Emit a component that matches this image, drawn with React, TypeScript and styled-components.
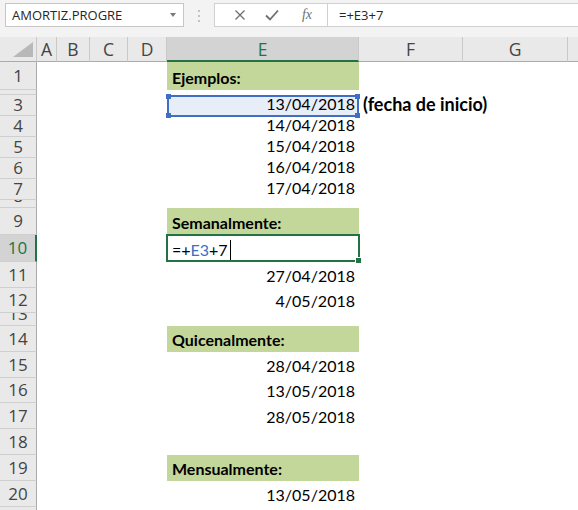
import React from "react";
import styled, { createGlobalStyle, css } from "styled-components";

const GlobalStyle = createGlobalStyle`
  html, body { margin: 0; padding: 0; background: #fff; }
  body { width: 578px; height: 510px; overflow: hidden; font-family: "Open Sans", "Noto Sans", sans-serif; }
`;

const Window = styled.div`
  display: flex;
  flex-direction: column;
  width: 578px;
  height: 510px;
  overflow: hidden;
`;

const FormulaBar = styled.div`
  display: flex;
  align-items: flex-start;
  height: 37px;
  box-sizing: border-box;
  padding: 3px 0 0 5px;
  background: #f3f3f3;
  flex-shrink: 0;
`;

const NameBox = styled.div`
  display: flex;
  align-items: center;
  justify-content: space-between;
  width: 179px;
  height: 24px;
  box-sizing: border-box;
  padding: 0 7px 0 6px;
  border: 1px solid #c6c6c6;
  background: #fff;
  font-size: 13px;
  color: #262626;
`;

const DropArrow = styled.span`
  width: 0;
  height: 0;
  border-left: 3.5px solid transparent;
  border-right: 3.5px solid transparent;
  border-top: 4px solid #7a7a7a;
`;

const Grip = styled.div`
  display: flex;
  flex-direction: column;
  gap: 3px;
  margin: 7px 14px 0 14px;
`;

const GripDot = styled.span`
  width: 2px;
  height: 2px;
  background: #c2c2c2;
`;

const ButtonBox = styled.div`
  display: flex;
  align-items: center;
  width: 113px;
  height: 24px;
  box-sizing: border-box;
  padding-left: 10px;
  border: 1px solid #d0d0d0;
  border-right: none;
  background: #fff;
`;

const BarButton = styled.span<{ $w: number }>`
  display: flex;
  align-items: center;
  justify-content: center;
  width: ${p => p.$w}px;
  height: 22px;
  color: #6e6e6e;
`;

const Fx = styled.span`
  font-family: "Liberation Serif", "DejaVu Serif", serif;
  font-style: italic;
  font-size: 14px;
  color: #707070;
`;

const FormulaInput = styled.div`
  flex: 1;
  display: flex;
  align-items: center;
  height: 24px;
  box-sizing: border-box;
  padding-left: 11px;
  border: 1px solid #d0d0d0;
  border-right: none;
  background: #fff;
  font-size: 13px;
  color: #262626;
`;

const Grid = styled.div<{ $rows: string }>`
  display: grid;
  grid-template-columns: 37px 20px 33px 38px 39px 192px 104px 105px 90px;
  grid-template-rows: 25px ${p => p.$rows};
  width: 658px;
  background: #fff;
`;

const Corner = styled.div`
  position: relative;
  background: #e9e9e9;
  border-right: 1px solid #c9c9c9;
  border-bottom: 1px solid #ababab;
  box-sizing: border-box;
`;

const CornerMark = styled.span`
  position: absolute;
  right: 3px;
  bottom: 4px;
  width: 20px;
  height: 15px;
  background: #b8b8b8;
  clip-path: polygon(100% 0, 100% 100%, 0 100%);
`;

const ColHeader = styled.div<{ $selected?: boolean }>`
  display: flex;
  align-items: center;
  justify-content: center;
  box-sizing: border-box;
  background: #e9e9e9;
  border-right: 1px solid #c9c9c9;
  border-bottom: 1px solid #ababab;
  font-size: 17.5px;
  color: #444;
  overflow: hidden;
  ${p => p.$selected && css`
    background: #d3d3d3;
    color: #217346;
    border-bottom: 2px solid #217346;
  `}
`;

const RowHeader = styled.div<{ $selected?: boolean; $compact?: boolean }>`
  display: flex;
  align-items: ${p => (p.$compact ? "flex-end" : "center")};
  justify-content: center;
  box-sizing: border-box;
  background: #e9e9e9;
  border-right: 1px solid #ababab;
  border-bottom: 1px solid #cfcfcf;
  font-size: 17px;
  line-height: 22px;
  color: #444;
  overflow: hidden;
  ${p => p.$selected && css`
    background: #d3d3d3;
    color: #217346;
    border-right: 2px solid #217346;
  `}
`;

const Cell = styled.div<{ $fill?: boolean; $align?: "left" | "right" }>`
  position: relative;
  display: flex;
  align-items: flex-end;
  justify-content: ${p => (p.$align === "right" ? "flex-end" : "flex-start")};
  box-sizing: border-box;
  padding: 0 4px 4px 5px;
  font-family: Lato, "Open Sans", sans-serif;
  font-size: 16px;
  line-height: 16px;
  color: #000;
  white-space: nowrap;
  background: ${p => (p.$fill ? "#c4d79b" : "transparent")};
`;

const Title = styled.span`
  font-weight: 700;
`;

const Note = styled.span`
  position: relative;
  z-index: 2;
  font-weight: 700;
  font-size: 18px;
  margin-left: -1px;
`;

const RefBox = styled.div`
  position: absolute;
  inset: 0 0 -1px 0;
  border: 2px solid #3f6fc4;
  background: #e8eef8;
  z-index: 0;
`;

const RefHandle = styled.span<{ $top?: boolean; $left?: boolean }>`
  position: absolute;
  width: 5px;
  height: 5px;
  background: #3f6fc4;
  ${p => (p.$top ? "top: -3px;" : "bottom: -3px;")}
  ${p => (p.$left ? "left: -3px;" : "right: -3px;")}
`;

const CellText = styled.span`
  position: relative;
  z-index: 1;
`;

const ActiveBox = styled.div`
  position: absolute;
  inset: -1px -1px 0 -1px;
  border: 2px solid #217346;
  pointer-events: none;
`;

const FillHandle = styled.span`
  position: absolute;
  right: -4px;
  bottom: -4px;
  width: 5px;
  height: 5px;
  background: #217346;
  border: 1px solid #fff;
`;

const RefText = styled.span`
  color: #3f6fc4;
`;

const Caret = styled.span`
  display: inline-block;
  width: 1px;
  height: 20px;
  margin-left: 2px;
  margin-bottom: -2px;
  background: #000;
  vertical-align: bottom;
`;

type RowDef = {
  n: number;
  h: number;
  title?: string;
  date?: string;
  note?: string;
  ref?: boolean;
  edit?: boolean;
};

const rows: RowDef[] = [
  { n: 1, h: 28, title: "Ejemplos:" },
  { n: 2, h: 5 },
  { n: 3, h: 21, date: "13/04/2018", note: "(fecha de inicio)", ref: true },
  { n: 4, h: 21, date: "14/04/2018" },
  { n: 5, h: 21, date: "15/04/2018" },
  { n: 6, h: 21, date: "16/04/2018" },
  { n: 7, h: 21, date: "17/04/2018" },
  { n: 8, h: 8 },
  { n: 9, h: 27, title: "Semanalmente:" },
  { n: 10, h: 27, edit: true },
  { n: 11, h: 26, date: "27/04/2018" },
  { n: 12, h: 25, date: "4/05/2018" },
  { n: 13, h: 13 },
  { n: 14, h: 26, title: "Quicenalmente:" },
  { n: 15, h: 26, date: "28/04/2018" },
  { n: 16, h: 25, date: "13/05/2018" },
  { n: 17, h: 26, date: "28/05/2018" },
  { n: 18, h: 26 },
  { n: 19, h: 26, title: "Mensualmente:" },
  { n: 20, h: 26, date: "13/05/2018" },
  { n: 21, h: 26 },
];

const columns = ["A", "B", "C", "D", "E", "F", "G", "H"];

const CrossIcon = () => (
  <svg width="12" height="12" viewBox="0 0 12 12">
    <path d="M1.5 1.5 L10.5 10.5 M10.5 1.5 L1.5 10.5" stroke="currentColor" strokeWidth="1.3" fill="none" />
  </svg>
);

const CheckIcon = () => (
  <svg width="14" height="12" viewBox="0 0 14 12">
    <path d="M1 6.5 L5 10.5 L13 1.5" stroke="currentColor" strokeWidth="1.8" fill="none" />
  </svg>
);

const ECell = ({ row }: { row: RowDef }) => {
  if (row.title) {
    return <Cell $fill><Title>{row.title}</Title></Cell>;
  }
  if (row.edit) {
    return (
      <Cell>
        <CellText>
          =+<RefText>E3</RefText>+7<Caret />
        </CellText>
        <ActiveBox><FillHandle /></ActiveBox>
      </Cell>
    );
  }
  return (
    <Cell $align="right">
      {row.ref && (
        <RefBox>
          <RefHandle $top $left />
          <RefHandle $top />
          <RefHandle $left />
          <RefHandle />
        </RefBox>
      )}
      {row.date && <CellText>{row.date}</CellText>}
    </Cell>
  );
};

export default function App() {
  const rowTemplate = rows.map(r => `${r.h}px`).join(" ");
  return (
    <Window>
      <GlobalStyle />
      <FormulaBar>
        <NameBox>
          <span>AMORTIZ.PROGRE</span>
          <DropArrow />
        </NameBox>
        <Grip>
          <GripDot />
          <GripDot />
          <GripDot />
        </Grip>
        <ButtonBox>
          <BarButton $w={30}><CrossIcon /></BarButton>
          <BarButton $w={34}><CheckIcon /></BarButton>
          <BarButton $w={36}><Fx>fx</Fx></BarButton>
        </ButtonBox>
        <FormulaInput>=+E3+7</FormulaInput>
      </FormulaBar>
      <Grid $rows={rowTemplate}>
        <Corner><CornerMark /></Corner>
        {columns.map(c => (
          <ColHeader key={c} $selected={c === "E"}>{c}</ColHeader>
        ))}
        {rows.map(r => (
          <React.Fragment key={r.n}>
            <RowHeader $selected={r.edit} $compact={r.h < 15}>{r.n}</RowHeader>
            <Cell />
            <Cell />
            <Cell />
            <Cell />
            <ECell row={r} />
            <Cell>{r.note && <Note>{r.note}</Note>}</Cell>
            <Cell />
            <Cell />
          </React.Fragment>
        ))}
      </Grid>
    </Window>
  );
}
